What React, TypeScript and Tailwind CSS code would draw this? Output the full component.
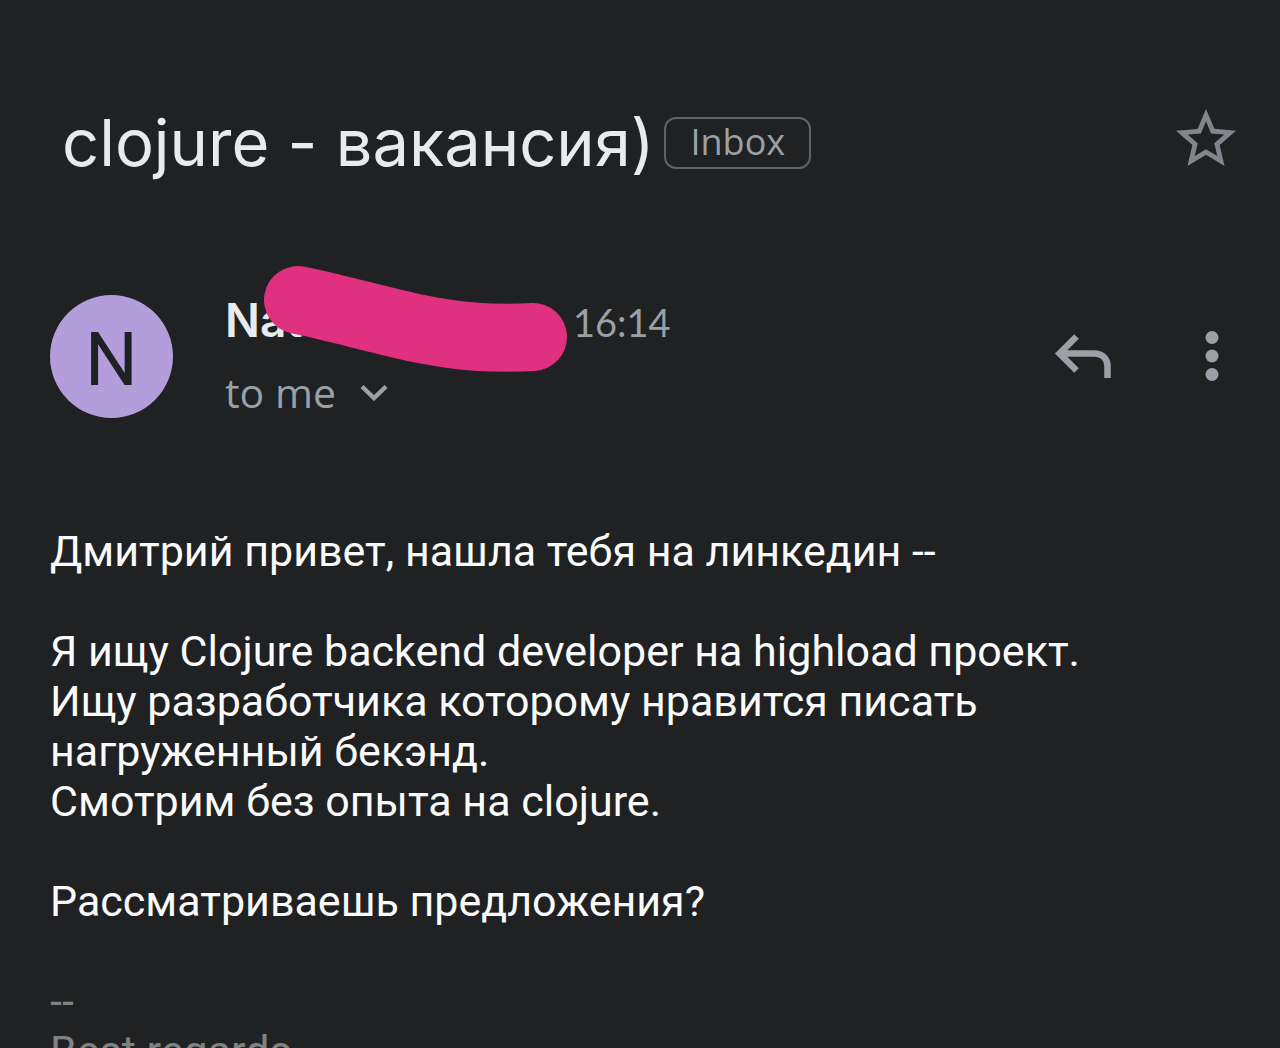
function StarIcon() {
  return (
    <svg width="72" height="72" viewBox="0 0 24 24" fill="currentColor" aria-hidden="true">
      <path d="M22 9.240l-7.190-.620L12 2 9.190 8.630 2 9.240l5.460 4.730L5.820 21 12 17.270 18.180 21l-1.630-7.030L22 9.240zM12 15.400l-3.760 2.270 1-4.280-3.320-2.880 4.380-.380L12 6.100l1.710 4.040 4.380.380-3.320 2.880 1 4.280L12 15.400z" />
    </svg>
  );
}

function ReplyIcon() {
  return (
    <svg width="58" height="46" viewBox="0 0 58 46" fill="none" stroke="currentColor" strokeWidth="6.500" aria-hidden="true">
      <path d="M22.500 3.500L5.500 20.500L22.500 37.500M6 20.500H40C48.500 20.500 53.500 26 53.500 33V45" />
    </svg>
  );
}

function MoreIcon() {
  return (
    <svg width="14" height="50" viewBox="0 0 14 50" fill="currentColor" aria-hidden="true">
      <circle cx="7" cy="6.500" r="6.500" />
      <circle cx="7" cy="25" r="6.500" />
      <circle cx="7" cy="43.500" r="6.500" />
    </svg>
  );
}

function Chevron() {
  return (
    <svg width="28" height="18" viewBox="0 0 28 18" fill="none" stroke="currentColor" strokeWidth="4.500" aria-hidden="true">
      <path d="M2 3.500L14 15L26 3.500" />
    </svg>
  );
}

function MarkerStroke() {
  return (
    <svg className="absolute -top-7 left-9 max-w-none" width="310" height="116" viewBox="0 0 310 116" fill="none" aria-hidden="true">
      <path
        d="M37 38C72 45 118 58 160 67C200 75 230 77 272 75"
        stroke="#e03080"
        strokeWidth="68"
        strokeLinecap="round"
      />
    </svg>
  );
}

export default function App() {
  return (
    <main className="h-screen overflow-hidden bg-[#1f2123] font-['Roboto',sans-serif]">
      <header className="flex items-center justify-between pt-[103px] pr-[38px] pl-[62px]">
        <div className="flex items-center gap-[10px]">
          <h1 className="font-['Inter',sans-serif] text-[65px] leading-[78px] whitespace-nowrap text-[#e8eaed]">
            clojure - вакансия)
          </h1>
          <span className="rounded-xl border-2 border-[#5f6368] px-6 pb-[2px] font-['Open_Sans',sans-serif] text-[36px] leading-[46px] text-[#9aa0a6]">
            Inbox
          </span>
        </div>
        <button type="button" aria-label="Star" className="mb-2 text-[#80868b]">
          <StarIcon />
        </button>
      </header>

      <section className="mt-[107px] flex items-center pr-[61px] pl-[50px] text-[#9aa0a6]">
        <div className="flex size-[123px] shrink-0 items-center justify-center rounded-full bg-[#b39ddb] pt-2 text-[74px] leading-none text-[#202124]">
          N
        </div>
        <div className="ml-[52px] flex flex-col gap-[10px]">
          <div className="relative flex items-baseline">
            <span className="w-[348px] font-['Inter',sans-serif] text-[46px] leading-[60px] font-semibold text-[#e8eaed]">Nat</span>
            <MarkerStroke />
            <time className="font-['Lato',sans-serif] text-[38px] leading-[60px]">16:14</time>
          </div>
          <button type="button" className="flex items-center gap-6 font-['Open_Sans',sans-serif] text-[41px] leading-[60px]">
            to me
            <Chevron />
          </button>
        </div>
        <div className="ml-auto flex items-center gap-[93px]">
          <button type="button" aria-label="Reply">
            <ReplyIcon />
          </button>
          <button type="button" aria-label="More options">
            <MoreIcon />
          </button>
        </div>
      </section>

      <article className="mt-[104px] flex flex-col gap-[50px] px-[50px] text-[43px] leading-[50px] text-[#fafafa]">
        <p>Дмитрий привет, нашла тебя на линкедин --</p>
        <p>
          Я ищу Clojure backend developer на highload проект.
          <br />
          Ищу разработчика которому нравится писать
          <br />
          нагруженный бекэнд.
          <br />
          Смотрим без опыта на clojure.
        </p>
        <p>Рассматриваешь предложения?</p>
        <p className="text-[#808182]">
          --
          <br />
          Best regards
        </p>
      </article>
    </main>
  );
}
